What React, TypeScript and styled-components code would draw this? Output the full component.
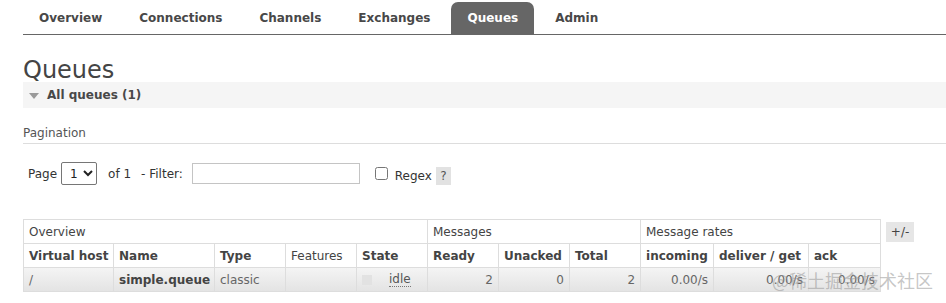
import React from "react";
import styled, { createGlobalStyle } from "styled-components";

const GlobalStyle = createGlobalStyle`
  html, body { margin: 0; padding: 0; background: #fff; }
  body {
    font-family: "DejaVu Sans", Verdana, sans-serif;
    font-size: 12px;
    color: #444;
    overflow: hidden;
  }
`;

const Page = styled.div`
  position: relative;
  width: 946px;
  height: 303px;
`;

const Menu = styled.nav`
  display: flex;
  gap: 5px;
  margin-left: 23px;
  padding-top: 2px;
  border-bottom: 1px solid #666;
`;

const Tab = styled.div<{ $active?: boolean }>`
  padding: 0 16px;
  height: 32px;
  line-height: 32px;
  font-weight: bold;
  font-size: 12px;
  border-radius: 7px 7px 0 0;
  color: ${(p) => (p.$active ? "#fff" : "#484848")};
  background: ${(p) => (p.$active ? "#666" : "transparent")};
`;

const Main = styled.main`
  margin-left: 23px;
`;

const Title = styled.h1`
  margin: 23px 0 0;
  font-size: 24px;
  line-height: 24px;
  font-weight: normal;
  color: #444;
`;

const SectionBar = styled.div`
  display: flex;
  align-items: center;
  gap: 8px;
  height: 26px;
  padding-left: 6px;
  background: #f5f5f5;
  font-weight: bold;
  color: #484848;
`;

const Triangle = styled.span`
  width: 0;
  height: 0;
  border-left: 5.5px solid transparent;
  border-right: 5.5px solid transparent;
  border-top: 6px solid #9a9a9a;
  margin-top: 1px;
`;

const SubHeading = styled.div`
  margin-top: 18px;
  line-height: 14px;
  padding-bottom: 3px;
  border-bottom: 1px solid #ddd;
  color: #555;
`;

const PagerRow = styled.div`
  display: flex;
  align-items: center;
  margin-top: 18px;
  padding-left: 5px;
  height: 23px;
  color: #333;
`;

const Select = styled.select`
  box-sizing: border-box;
  width: 36px;
  height: 23px;
  margin-left: 4px;
  padding: 0 0 0 4px;
  font-family: inherit;
  font-size: 12px;
  color: #222;
  border: 1px solid #767676;
  border-radius: 2px;
  background: #fff;
`;

const Text = styled.span<{ $ml?: number }>`
  margin-left: ${(p) => p.$ml ?? 0}px;
`;

const FilterInput = styled.input`
  box-sizing: border-box;
  width: 168px;
  height: 21px;
  margin-left: 9px;
  border: 1px solid #c4c4c4;
  padding: 0 3px;
`;

const RegexLabel = styled.label`
  display: flex;
  align-items: center;
  margin-left: 15px;
  margin-top: 4px;
`;

const CheckBox = styled.input`
  box-sizing: border-box;
  width: 13px;
  height: 13px;
  margin: -5px 7px 0 0;
`;

const Help = styled.span`
  display: inline-block;
  width: 15px;
  height: 18px;
  line-height: 18px;
  margin-left: 4px;
  margin-top: 1px;
  text-align: center;
  background: #e2e2e2;
  color: #555;
`;

const TableRow = styled.div`
  display: flex;
  align-items: flex-start;
  gap: 5px;
  margin-top: 34px;
`;

const Table = styled.table`
  border-collapse: collapse;
  table-layout: fixed;
  width: 858px;
  border: 1px solid #ddd;
`;

const Cell = styled.td<{ $align?: string; $bold?: boolean; $muted?: boolean }>`
  box-sizing: border-box;
  height: 24px;
  padding: 0 5px;
  border: 1px solid #ddd;
  text-align: ${(p) => p.$align ?? "left"};
  font-weight: ${(p) => (p.$bold ? "bold" : "normal")};
  color: ${(p) => (p.$muted ? "#666" : "#444")};
  white-space: nowrap;
  overflow: hidden;
`;

const HeadCell = styled.th<{ $plain?: boolean }>`
  box-sizing: border-box;
  height: 24px;
  padding: 0 5px;
  border: 1px solid #ddd;
  text-align: left;
  font-weight: ${(p) => (p.$plain ? "normal" : "bold")};
  color: #444;
  white-space: nowrap;
`;

const DataRow = styled.tr`
  background: linear-gradient(#f4f4f4, #e3e3e3);
`;

const StateBox = styled.div`
  display: flex;
  align-items: center;
  gap: 17px;
`;

const StatusSquare = styled.span`
  width: 10px;
  height: 10px;
  background: #e2e2e2;
`;

const Abbr = styled.abbr`
  text-decoration: none;
  border-bottom: 1px dotted #777;
  line-height: 13px;
  color: #555;
`;

const ToggleButton = styled.span`
  margin-top: 3px;
  width: 28px;
  height: 20px;
  line-height: 20px;
  text-align: center;
  background: #e6e6e6;
  color: #444;
`;

const Watermark = styled.div`
  position: absolute;
  left: 772px;
  top: 268px;
  font-family: "Noto Sans CJK SC", "DejaVu Sans", sans-serif;
  font-size: 18px;
  line-height: 24px;
  color: rgba(150, 150, 150, 0.55);
  pointer-events: none;
  white-space: nowrap;
`;

const widths = [90, 101, 71, 71, 71, 71, 71, 71, 73, 95, 72];

const tabs = ["Overview", "Connections", "Channels", "Exchanges", "Queues", "Admin"];

export default function App() {
  return (
    <Page>
      <GlobalStyle />
      <Menu>
        {tabs.map((t) => (
          <Tab key={t} $active={t === "Queues"}>
            {t}
          </Tab>
        ))}
      </Menu>
      <Main>
        <Title>Queues</Title>
        <SectionBar>
          <Triangle />
          All queues (1)
        </SectionBar>
        <SubHeading>Pagination</SubHeading>
        <PagerRow>
          <span>Page</span>
          <Select defaultValue="1">
            <option value="1">1</option>
          </Select>
          <Text $ml={11}>of 1</Text>
          <Text $ml={10}>- Filter:</Text>
          <FilterInput type="text" />
          <RegexLabel>
            <CheckBox type="checkbox" />
            <span>Regex</span>
            <Help>?</Help>
          </RegexLabel>
        </PagerRow>
        <TableRow>
          <Table>
            <colgroup>
              {widths.map((w, i) => (
                <col key={i} style={{ width: w }} />
              ))}
            </colgroup>
            <thead>
              <tr>
                <HeadCell $plain colSpan={5}>Overview</HeadCell>
                <HeadCell $plain colSpan={3}>Messages</HeadCell>
                <HeadCell $plain colSpan={3}>Message rates</HeadCell>
              </tr>
              <tr>
                <HeadCell>Virtual host</HeadCell>
                <HeadCell>Name</HeadCell>
                <HeadCell>Type</HeadCell>
                <HeadCell $plain>Features</HeadCell>
                <HeadCell>State</HeadCell>
                <HeadCell>Ready</HeadCell>
                <HeadCell>Unacked</HeadCell>
                <HeadCell>Total</HeadCell>
                <HeadCell>incoming</HeadCell>
                <HeadCell>deliver / get</HeadCell>
                <HeadCell>ack</HeadCell>
              </tr>
            </thead>
            <tbody>
              <DataRow>
                <Cell $muted>/</Cell>
                <Cell $bold>simple.queue</Cell>
                <Cell $muted>classic</Cell>
                <Cell />
                <Cell>
                  <StateBox>
                    <StatusSquare />
                    <Abbr title="idle">idle</Abbr>
                  </StateBox>
                </Cell>
                <Cell $align="right" $muted>2</Cell>
                <Cell $align="right" $muted>0</Cell>
                <Cell $align="right" $muted>2</Cell>
                <Cell $align="right" $muted>0.00/s</Cell>
                <Cell $align="right" $muted>0.00/s</Cell>
                <Cell $align="right" $muted>0.00/s</Cell>
              </DataRow>
            </tbody>
          </Table>
          <ToggleButton>+/-</ToggleButton>
        </TableRow>
      </Main>
      <Watermark>@稀土掘金技术社区</Watermark>
    </Page>
  );
}
